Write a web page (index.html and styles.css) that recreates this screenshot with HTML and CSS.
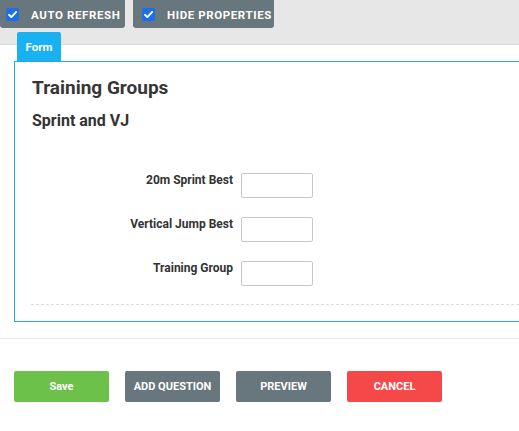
FILE: index.html
```html
<!DOCTYPE html>
<html>
<head>
<meta charset="utf-8">
<link rel="stylesheet" href="styles.css">
</head>
<body>
<div class="topbar">
  <label class="tbtn tbtn-auto">
    <span class="cb"><svg viewBox="0 0 13 13" width="13" height="13"><path d="M3 6.8 L5.4 9.1 L10.2 3.9" fill="none" stroke="#fff" stroke-width="1.9" stroke-linecap="round" stroke-linejoin="round"/></svg></span>
    <span class="tlabel">AUTO REFRESH</span>
  </label>
  <label class="tbtn tbtn-hide">
    <span class="cb"><svg viewBox="0 0 13 13" width="13" height="13"><path d="M3 6.8 L5.4 9.1 L10.2 3.9" fill="none" stroke="#fff" stroke-width="1.9" stroke-linecap="round" stroke-linejoin="round"/></svg></span>
    <span class="tlabel">HIDE PROPERTIES</span>
  </label>
</div>

<div class="form-wrap">
  <div class="tab">Form</div>
  <div class="panel">
    <h1 class="title">Training Groups</h1>
    <h2 class="subtitle">Sprint and VJ</h2>
    <div class="fields">
      <div class="flabel">20m Sprint Best</div>
      <div class="finput"></div>
      <div class="flabel">Vertical Jump Best</div>
      <div class="finput"></div>
      <div class="flabel">Training Group</div>
      <div class="finput"></div>
    </div>
    <div class="dashed"></div>
  </div>
</div>

<div class="sep"></div>

<div class="actions">
  <button class="btn btn-save">Save</button>
  <button class="btn btn-gray">ADD QUESTION</button>
  <button class="btn btn-gray">PREVIEW</button>
  <button class="btn btn-cancel">CANCEL</button>
</div>
</body>
</html>
```
FILE: styles.css
```css
html, body {
  margin: 0;
  padding: 0;
  background: #fff;
  overflow: hidden;
}
body {
  font-family: Roboto, "Liberation Sans", sans-serif;
  color: #333;
  width: 519px;
  height: 431px;
}
.topbar {
  height: 44px;
  background: #e7e7e7;
  border-bottom: 1px solid #d6d6d6;
  display: flex;
  align-items: flex-start;
  gap: 8px;
}
.tbtn {
  height: 28px;
  background: #68767d;
  border-radius: 0 0 3px 3px;
  display: flex;
  align-items: center;
  box-sizing: border-box;
  padding-top: 1px;
}
.tbtn-auto {
  width: 125px;
  padding-left: 6px;
  gap: 12px;
}
.tbtn-hide {
  width: 141px;
  padding-left: 9px;
  gap: 12px;
}
.cb {
  width: 13px;
  height: 13px;
  background: #1b6fe8;
  border-radius: 2px;
  display: block;
  margin-top: -1px;
}
.cb svg { display: block; }
.tlabel {
  color: #fff;
  font-weight: 700;
  font-size: 11.5px;
  letter-spacing: 0.6px;
  line-height: 14px;
}
.form-wrap {
  position: relative;
  margin-top: -13px;
}
.tab {
  margin-left: 17px;
  width: 44px;
  height: 29px;
  background: #1ab1f3;
  border-radius: 2px 2px 0 0;
  color: #fff;
  font-weight: 700;
  font-size: 11.5px;
  display: flex;
  align-items: center;
  justify-content: center;
}
.panel {
  margin-left: 14px;
  border: 1px solid #22abe8;
  border-right: none;
  padding: 15px 0 16px 17px;
}
.title {
  margin: 0;
  font-size: 19px;
  line-height: 22px;
  font-weight: 700;
  color: #363636;
}
.subtitle {
  margin: 12px 0 0;
  font-size: 16px;
  line-height: 20px;
  font-weight: 700;
  color: #333;
}
.fields {
  margin-top: 42px;
  display: grid;
  grid-template-columns: 201px 72px;
  column-gap: 8px;
  row-gap: 19px;
}
.flabel {
  text-align: right;
  font-size: 12px;
  line-height: 14px;
  font-weight: 700;
  color: #333;
}
.finput {
  height: 25px;
  box-sizing: border-box;
  border: 1px solid #c8c8c8;
  border-radius: 2px;
  background: #fff;
}
.dashed {
  margin-top: 18px;
  margin-left: -1px;
  border-top: 1px dashed #dddddd;
}
.sep {
  margin-top: 16px;
  border-top: 1px solid #ececec;
}
.actions {
  margin-top: 32px;
  padding-left: 14px;
  display: flex;
  gap: 16px;
}
.btn {
  width: 95px;
  height: 31px;
  border: none;
  border-radius: 2px;
  color: #fff;
  font-family: Roboto, "Liberation Sans", sans-serif;
  font-weight: 700;
  font-size: 11px;
  padding: 0;
  display: flex;
  align-items: center;
  justify-content: center;
}
.btn-save { background: #6dc04a; }
.btn-gray { background: #68767d; }
.btn-cancel { background: #f54848; }
```
